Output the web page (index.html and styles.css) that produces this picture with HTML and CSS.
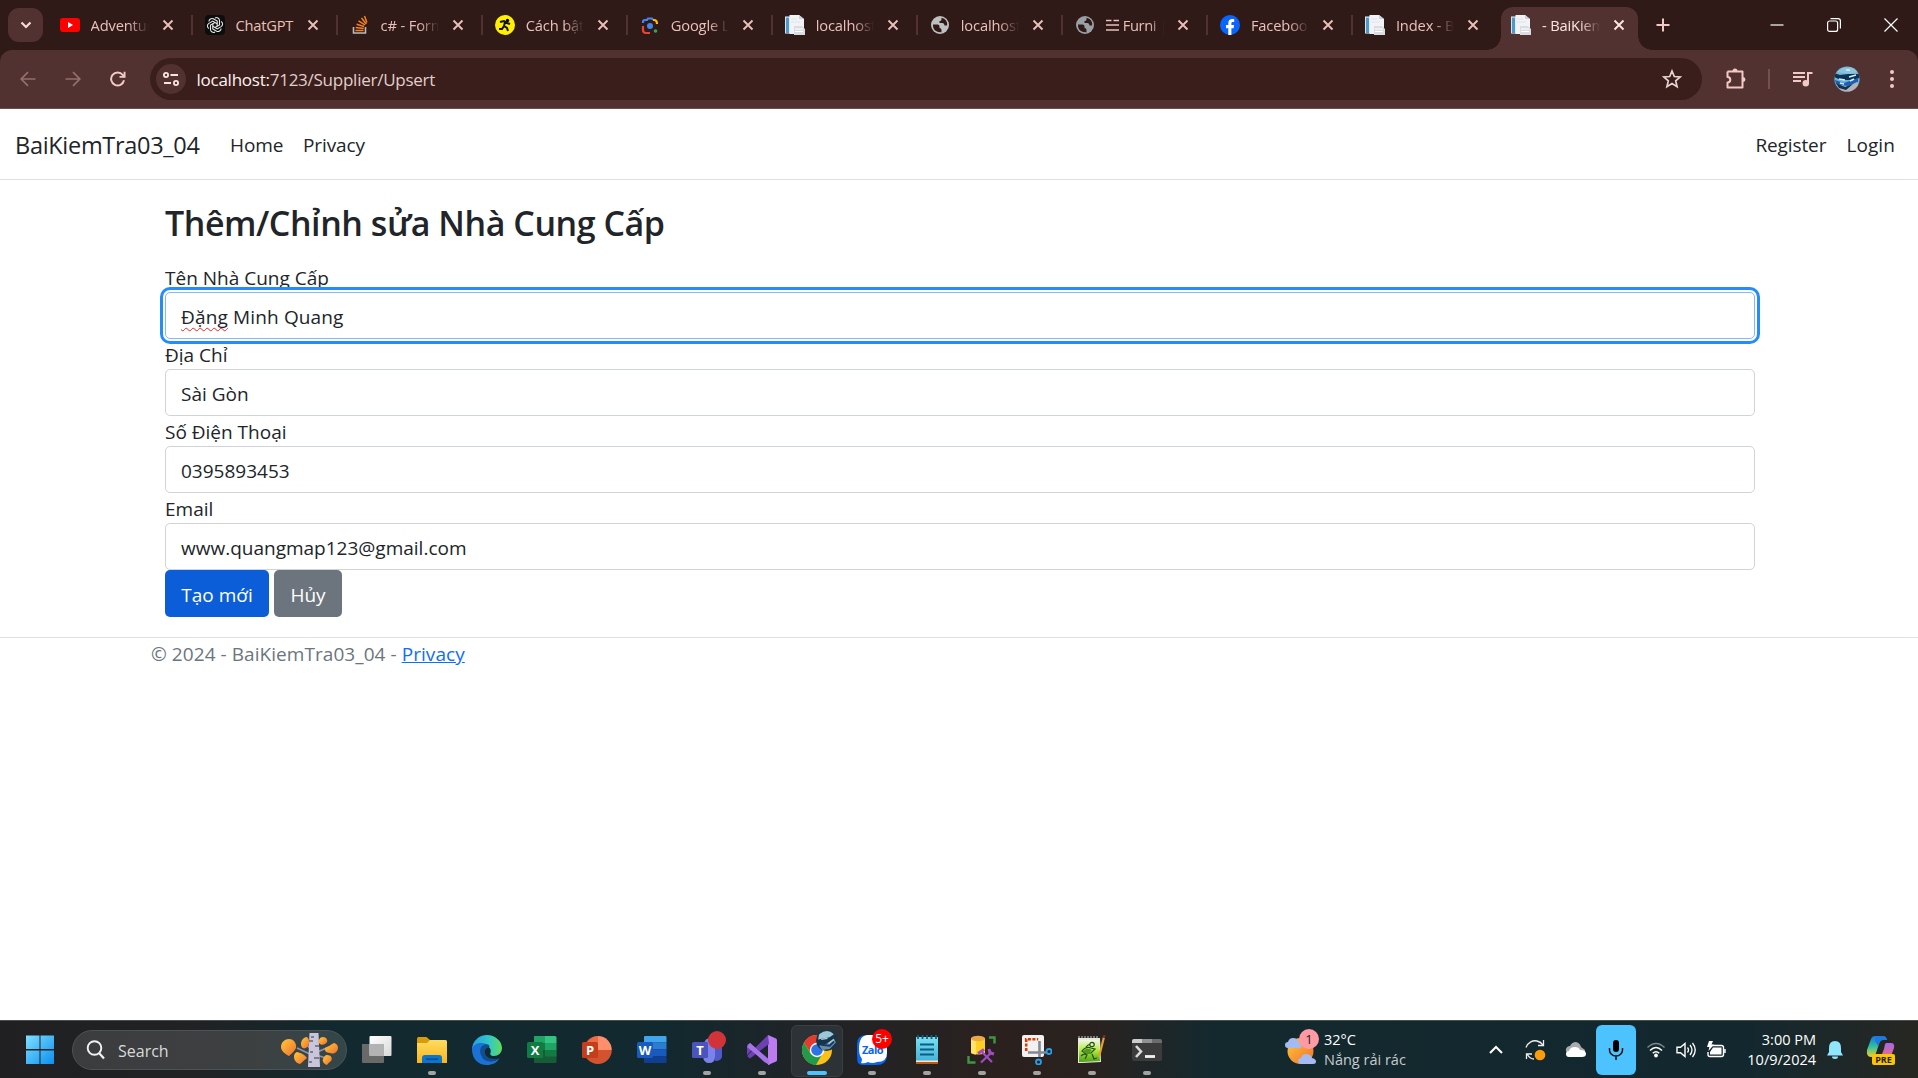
FILE: index.html
```html
<!DOCTYPE html>
<html lang="vi">
<head>
<meta charset="utf-8">
<title>- BaiKiemTra03_04</title>
<link rel="stylesheet" href="styles.css">
</head>
<body>
<svg class="defs" width="0" height="0" aria-hidden="true">
  <defs>
    <symbol id="x" viewBox="0 0 12 12"><path d="M1.500 1.500l9 9M10.500 1.500l-9 9" stroke="currentColor" stroke-width="1.900" fill="none"/></symbol>
    <symbol id="page" viewBox="0 0 20 20"><path d="M0 1.500h5v17H0z" fill="#f4f7fa"/><path d="M.8 2.500h3.400v15.500H.8z" fill="#4a9ad0"/><path d="M4.500 0H14l5 4v15H4.500z" fill="#f1f3f6"/><path d="M14 0l5 4h-5z" fill="#cbd2da"/><path d="M9 11h8l3 3v6H9z" fill="#d9dde2"/><path d="M10 14h8M10 16.500h8" stroke="#fff"/><path d="M6 4h6M6 7h9" stroke="#dfe5eb"/></symbol>
    <symbol id="globe" viewBox="0 0 20 20"><circle cx="10" cy="10" r="9" fill="currentColor"/><path d="M3 9.500h4.500q2 0 2 2v1.500q2 0 2 2v2.200Q5 17.500 3.200 12.500zM11.500 2.800v1.700q0 1.500-2 1.500v2h3q2 0 2 2.500h2.600Q17.800 4.500 11.500 2.800z" fill="#2f1a17"/></symbol>
    <linearGradient id="gwin" x1="0" y1="0" x2="1" y2="1"><stop offset="0" stop-color="#7fe0ff"/><stop offset="1" stop-color="#0b8ff0"/></linearGradient>
    <linearGradient id="gfold" x1="0" y1="0" x2="0" y2="1"><stop offset="0" stop-color="#ffdc62"/><stop offset="1" stop-color="#f9b515"/></linearGradient>
    <linearGradient id="gedge" x1="0" y1="0" x2="1" y2="0"><stop offset="0" stop-color="#1ea0e8"/><stop offset=".6" stop-color="#34c9c4"/><stop offset="1" stop-color="#62dc58"/></linearGradient>
    <linearGradient id="gorange" x1="0" y1="0" x2="1" y2="1"><stop offset="0" stop-color="#ffc83a"/><stop offset="1" stop-color="#f0702c"/></linearGradient>
    <linearGradient id="gview" x1="0" y1="0" x2="1" y2="1"><stop offset="0" stop-color="#fff"/><stop offset="1" stop-color="#d9d9d9"/></linearGradient>
    <linearGradient id="gnote" x1="0" y1="0" x2="0" y2="1"><stop offset="0" stop-color="#7ae0f2"/><stop offset="1" stop-color="#43b3da"/></linearGradient>
    <linearGradient id="ggreen" x1="0" y1="0" x2="0" y2="1"><stop offset="0" stop-color="#f1f6e6"/><stop offset=".45" stop-color="#b4ee3c"/><stop offset="1" stop-color="#4fa01c"/></linearGradient>
    <linearGradient id="gcopa" x1="0" y1="0" x2="0" y2="1"><stop offset="0" stop-color="#1b74e0"/><stop offset=".5" stop-color="#2fc0a0"/><stop offset="1" stop-color="#f1d028"/></linearGradient>
    <linearGradient id="gcopb" x1="0" y1="0" x2="0" y2="1"><stop offset="0" stop-color="#a667e8"/><stop offset="1" stop-color="#f46c72"/></linearGradient>
  </defs>
</svg>

<header class="chrome">
  <div class="tabstrip">
    <button class="tabsearch" aria-label="Search tabs"><svg width="12" height="8" viewBox="0 0 12 8"><path d="M1.500 1.500L6 6l4.500-4.500" stroke="#f7d9d5" stroke-width="2.200" fill="none"/></svg></button>
    <div class="tabs">
      <div class="tab"><svg class="fav" viewBox="0 0 20 20"><rect y="3" width="20" height="14" rx="3" fill="#f00"/><path d="M8 7l5 3-5 3z" fill="#fff"/></svg><span class="title">Adventure</span><svg class="close"><use href="#x"/></svg></div>
      <div class="tab"><svg class="fav" viewBox="0 0 20 20"><rect width="20" height="20" rx="4" fill="#0d0d0d"/><g fill="none" stroke="#e8e8e8" stroke-width="1.100"><path id="petal" d="M10 3a3 3 0 0 1 4.500 2.500v4.500L10 12.500"/><use href="#petal" transform="rotate(60 10 10)"/><use href="#petal" transform="rotate(120 10 10)"/><use href="#petal" transform="rotate(180 10 10)"/><use href="#petal" transform="rotate(240 10 10)"/><use href="#petal" transform="rotate(300 10 10)"/></g></svg><span class="title">ChatGPT</span><svg class="close"><use href="#x"/></svg></div>
      <div class="tab"><svg class="fav" viewBox="0 0 20 20"><path d="M3.500 12v6h12v-6" fill="none" stroke="#bcbbbb" stroke-width="1.600"/><path d="M5.500 15.500h8M5.700 12.600l8 .8M6.600 9.300l7.500 2.200M8.500 5.800l6.500 4M11.500 3l4.800 6M14.500 1l2.400 6.500" stroke="#f48024" stroke-width="1.500"/></svg><span class="title">c# - Format</span><svg class="close"><use href="#x"/></svg></div>
      <div class="tab"><svg class="fav" viewBox="0 0 20 20"><circle cx="10" cy="10" r="10" fill="#fff000"/><circle cx="12.500" cy="5.500" r="1.700"/><path d="M5 7l4-1 3 2 3 1M10 7l-1 4 3 2 1 3M9 11l-2 3H4" fill="none" stroke="#111" stroke-width="2"/></svg><span class="title">Cách bật tắt</span><svg class="close"><use href="#x"/></svg></div>
      <div class="tab"><svg class="fav" viewBox="0 0 20 20"><g fill="none" stroke-width="2.200"><path d="M3 8V7q0-2 2-2h2l1-1.500h4L13 5" stroke="#4285f4"/><path d="M13 5h1q3 0 3 4" stroke="#fbbc04"/><path d="M3 11v4q0 3 3 3h4" stroke="#ea4335"/></g><circle cx="10" cy="11" r="3" fill="#4285f4"/><circle cx="15.500" cy="16" r="1.800" fill="#34a853"/></svg><span class="title">Google Lens</span><svg class="close"><use href="#x"/></svg></div>
      <div class="tab"><svg class="fav"><use href="#page"/></svg><span class="title">localhost:7123</span><svg class="close"><use href="#x"/></svg></div>
      <div class="tab"><svg class="fav light"><use href="#globe"/></svg><span class="title">localhost:7123</span><svg class="close"><use href="#x"/></svg></div>
      <div class="tab"><svg class="fav dim"><use href="#globe"/></svg><span class="title furni"><svg class="tri" width="13" height="13" viewBox="0 0 13 13"><path d="M0 1.500h5.500M7.500 1.500H13M0 6h13M0 11h13" stroke="currentColor" stroke-width="1.500"/></svg>Furni | Shop</span><svg class="close"><use href="#x"/></svg></div>
      <div class="tab"><svg class="fav" viewBox="0 0 20 20"><circle cx="10" cy="10" r="10" fill="#0866ff"/><path d="M8.300 20v-6.800H6V10h2.300V8.300C8.300 5.300 10 4 12.300 4c.8 0 1.500.1 1.900.2v2.700h-1.300c-1.300 0-1.500.7-1.500 1.500V10h2.700l-.5 3.200h-2.200V20z" fill="#fff"/></svg><span class="title">Facebook</span><svg class="close"><use href="#x"/></svg></div>
      <div class="tab nosep"><svg class="fav"><use href="#page"/></svg><span class="title">Index - BaiKiem</span><svg class="close"><use href="#x"/></svg></div>
      <div class="tab active"><svg class="fav"><use href="#page"/></svg><span class="title">- BaiKiemTra</span><svg class="close"><use href="#x"/></svg></div>
    </div>
    <svg class="newtab" width="14" height="14" viewBox="0 0 14 14"><path d="M7 0.500v13M.5 7h13" stroke="#f3c9c3" stroke-width="2"/></svg>
    <div class="winbtns">
      <svg width="14" height="14" viewBox="0 0 14 14"><path d="M.5 7h13" stroke="#fff" stroke-width="1.200"/></svg>
      <svg width="14" height="14" viewBox="0 0 14 14"><rect x=".6" y="3" width="10" height="10.400" rx="2" fill="none" stroke="#fff" stroke-width="1.200"/><path d="M3.500.7H11q2.400 0 2.400 2.400v7.500" fill="none" stroke="#fff" stroke-width="1.200"/></svg>
      <svg width="14" height="14" viewBox="0 0 14 14"><path d="M.5.5l13 13M13.500.5l-13 13" stroke="#fff" stroke-width="1.200"/></svg>
    </div>
  </div>
  <div class="toolbar">
    <div class="nav">
      <svg width="16" height="16" viewBox="0 0 16 16"><path d="M15.500 8H1.500M8 1.200L1.200 8 8 14.800" stroke="#946f6b" stroke-width="1.700" fill="none"/></svg>
      <svg width="16" height="16" viewBox="0 0 16 16"><path d="M.5 8h14M8 1.200L14.800 8 8 14.800" stroke="#946f6b" stroke-width="1.700" fill="none"/></svg>
      <svg width="16" height="16" viewBox="0 0 16 16"><path d="M14 9.300A6.500 6.500 0 1 1 12.800 4L14.500 6" stroke="#f3c9c3" stroke-width="2" fill="none"/><path d="M15.500 .8v6h-6v-1.900h4.100V.8z" fill="#f3c9c3"/></svg>
    </div>
    <div class="omnibox">
      <span class="siteinfo"><svg width="16" height="14" viewBox="0 0 16 14"><g fill="none" stroke="#f7e4e1" stroke-width="1.800"><circle cx="3" cy="3" r="2.100"/><path d="M7.500 3H15M1 11h7"/><circle cx="13" cy="11" r="2.100"/></g></svg></span>
      <span class="url"><b>localhost:</b>7123/Supplier/Upsert</span>
      <svg class="star" width="20" height="20" viewBox="0 0 20 20"><path d="M10 2l2.300 5.500 5.900.5-4.500 3.900 1.400 5.800L10 14.600l-5.100 3.100 1.400-5.800L1.800 8l5.900-.5z" fill="none" stroke="#e6d3d0" stroke-width="1.700"/></svg>
    </div>
    <div class="actions">
      <svg class="puzzle" width="22" height="22" viewBox="0 0 22 22"><path d="M2.500 3.500h15v6.500M17.500 13v6.500h-15v-5a2.800 2.800 0 0 0 0-5.600V3.500M17.500 9v6" fill="none" stroke="#f3c9c3" stroke-width="2" stroke-linejoin="round"/><path d="M7.500 3a2.500 2.500 0 0 1 5 0zM18 9a2.500 2.500 0 0 1 0 5z" fill="#f3c9c3"/></svg>
      <i class="vsep"></i>
      <svg class="music" width="20" height="16" viewBox="0 0 20 16"><path d="M0 2h12M0 6h12M0 10h8" stroke="#f3c9c3" stroke-width="1.900"/><circle cx="12.800" cy="12.300" r="3.200" fill="#f3c9c3"/><path d="M15 12.500V2h4.500" stroke="#f3c9c3" stroke-width="2" fill="none"/></svg>
      <svg class="avatar" width="26" height="26" viewBox="0 0 26 26"><clipPath id="av"><circle cx="13" cy="13" r="12.600"/></clipPath><g clip-path="url(#av)"><path fill="#6eb5d8" d="M0 0h26v26H0z"/><path d="M0 7l6 2 8-1 12 0v4l-9 2-10 0-7-3z" fill="#0d3356"/><path d="M3 6l5-4 12-1 4 5-9 2z" fill="#8cc4dc"/><path d="M1 14l9 3 14-5v4l-10 4-12-2z" fill="#1a60b4"/><path d="M4 21l8 1 11-6 3 6-6 6H8z" fill="#b5b1b6"/><path d="M2 17l9 4 8-3-7 6-7-2z" fill="#173050"/><path d="M5 13l6 1M15 11l7-2M12 4h4M6 17l4 1M16 15l4-2" stroke="#d4effa" stroke-width="1.500"/></g></svg>
      <svg class="dots" width="6" height="22" viewBox="0 0 6 22"><g fill="#f3c9c3"><circle cx="3" cy="4" r="2"/><circle cx="3" cy="11" r="2"/><circle cx="3" cy="18" r="2"/></g></svg>
    </div>
  </div>
</header>

<div class="site">
  <nav class="navbar">
    <a class="brand">BaiKiemTra03_04</a>
    <a class="navlink home">Home</a>
    <a class="navlink">Privacy</a>
    <span class="grow"></span>
    <a class="navlink register">Register</a>
    <a class="navlink login">Login</a>
  </nav>
  <main class="container">
    <h2>Thêm/Chỉnh sửa Nhà Cung Cấp</h2>
    <form>
      <label>Tên Nhà Cung Cấp</label>
      <div class="control focused"><span class="typo">Đặng</span> Minh Quang</div>
      <label>Địa Chỉ</label>
      <div class="control">Sài Gòn</div>
      <label>Số Điện Thoại</label>
      <div class="control">0395893453</div>
      <label>Email</label>
      <div class="control email">www.quangmap123@gmail.com</div>
      <div class="buttons"><button type="button" class="btn primary">Tạo mới</button><button type="button" class="btn secondary">Hủy</button></div>
    </form>
  </main>
  <footer>© 2024 - BaiKiemTra03_04 - <a>Privacy</a></footer>
</div>

<div class="taskbar">
  <svg class="start" width="30" height="30" viewBox="0 0 30 30"><path d="M1 .500h13.500V14H1zM15.500.500H29V14H15.500zM1 15.500h13.500V29H1zM15.500 15.500H29V29H15.500z" fill="url(#gwin)"/></svg>
  <div class="search">
    <svg width="20" height="20" viewBox="0 0 20 20"><circle cx="8.500" cy="8" r="6.800" fill="none" stroke="#f2f2f2" stroke-width="1.900"/><path d="M13 13l5 5.500" stroke="#f2f2f2" stroke-width="2.200"/></svg>
    <span>Search</span>
    <svg class="tree" width="60" height="34" viewBox="0 0 60 34"><path d="M32 22L17 15M33 18l-7-7M35 20l14-6M36 22l10 3" stroke="#8d93a8" stroke-width="1.800"/><path d="M29.500 0h9l1.500 34H28z" fill="#c9c5da"/><path d="M29 8h4M35 13h4M30 19h3M34 25h5M29 29h3M31 4h3" stroke="#676478" stroke-width="1.300"/><g fill="url(#gorange)"><path d="M9 6c5 0 8 5 7 9-2 4-5 6-7 8-4-2-8-5-8-9 0-5 4-8 8-8z"/><path d="M27 4c3 3 3 7 0 10-3 3-6 1-6-3s3-7 6-7z"/><path d="M43 4c3 0 5 3 4 5-2 3-6 4-8 1-1-3 1-6 4-6z"/><path d="M54 10c4 1 5 5 3 8-2 3-5 3-7 2-4 0-6-3-5-5 3-1 5-3 9-5z"/><path d="M17 19c3 1 6 1 10 6-3 2-4 4-7 6-4-1-6-4-6-7s1-4 3-5z"/><path d="M47 22c4 0 6 3 4 6-1 1-3 2-4 4-3-1-5-4-4-6s2-4 4-4z"/></g></svg>
  </div>
  <div class="apps">
    <div class="app"><svg viewBox="0 0 30 30"><path d="M0 9h22v18q0 1-1 1H1q-1 0-1-1z" fill="#696969"/><rect x="7.500" y="1" width="22" height="20" rx="1" fill="url(#gview)"/><path d="M7.500 9H22v12H8.500q-1 0-1-1z" fill="#b3b3b3"/></svg></div>
    <div class="app run"><svg viewBox="0 0 30 30"><path d="M0 3.500Q0 2 1.500 2h8L13 5v5H0z" fill="#d99a0c"/><path d="M0 8h10l3-3h15.500Q30 5 30 6.500V28H0z" fill="url(#gfold)"/><path d="M5 28v-5q0-3 3-3h14q3 0 3 3v5z" fill="#0a74cf"/><path d="M9 24.200h12" stroke="#064e96" stroke-width="1.500"/></svg></div>
    <div class="app"><svg viewBox="0 0 30 30"><path d="M0 15C0 6 7 0 15 0s15 6 15 13c0 5-4 8-8 8-3 0-4.500-1.500-3.500-3 1.500-5-3-8-8-7S0 17 0 15z" fill="url(#gedge)"/><path d="M0 14C2 8 9 7 14 9c-4 1-6 5-5 9 1 6 7 9 12 8 2 0 4-1 6.500-3C25 28 20 30 15 30 6 30 0 24 0 14z" fill="#1b72d4"/><path d="M14 9c-5 1-7 6-5 11 3 8 12 8 18 3-4 2-13 1-14-5-.5-2 0-4 3-5.500C19 12 17 9 14 9z" fill="#104d92"/></svg></div>
    <div class="app"><svg viewBox="0 0 30 30"><path d="M7 1h11v14H7z" fill="#21a366"/><path d="M18 1h10q1.500 0 1.500 1.500V8H18z" fill="#33c481"/><path d="M18 8h11.500v7H18z" fill="#21a366"/><path d="M7 8h11v7H7z" fill="#107c41"/><path d="M7 15h22.500v12q0 1-1 1H8q-1 0-1-1z" fill="#185c37"/><path d="M18 15h11.500v6.500H18z" fill="#107c41"/><rect y="7" width="16" height="16" rx="1.500" fill="#107c41"/><text x="8" y="20" class="officeletter">X</text></svg></div>
    <div class="app"><svg viewBox="0 0 30 30"><path d="M16 1a14 14 0 1 0 13.800 14H16z" fill="#d35230"/><path d="M16 1v14h13.800A14 14 0 0 0 16 1z" fill="#ff8f6b"/><path d="M3 15h13V1A14 14 0 0 0 3 15z" fill="#ed6c47"/><rect y="7" width="16" height="16" rx="1.500" fill="#c43e1c"/><text x="8" y="20" class="officeletter">P</text></svg></div>
    <div class="app"><svg viewBox="0 0 30 30"><path d="M7 2q0-1 1-1h20.500q1 0 1 1v5.500H7z" fill="#41a5ee"/><path d="M7 7.500h22.500v7H7z" fill="#2b7cd3"/><path d="M7 14.500h22.500v7H7z" fill="#185abd"/><path d="M7 21.500h22.500V27q0 1-1 1H8q-1 0-1-1z" fill="#103f91"/><rect y="7" width="16" height="16" rx="1.500" fill="#185abd"/><text x="8" y="20" class="officeletter">W</text></svg></div>
    <div class="app run"><svg viewBox="0 0 30 30"><circle cx="17" cy="8" r="4.500" fill="#7b83eb"/><path d="M11 12h12v10q0 6-6 6-5 0-6-6z" fill="#7b83eb"/><path d="M23 12h7v9q0 5-7 5z" fill="#5059c9"/><rect y="7" width="16" height="16" rx="1.500" fill="#4b53bc"/><text x="8" y="20" class="officeletter">T</text></svg><i class="badge reddot"></i></div>
    <div class="app run"><svg viewBox="0 0 30 30"><path d="M0 10l3-2 20 17v5L17 27z" fill="#8a5bd0"/><path d="M21 0l8 3.500q1 .5 1 2V25q0 1-1 1.500L21 30z" fill="#bd7bf0"/><path d="M21 0L1 20q-1 1 0 2l2 1.500L22 9zM0 10v10l5-5z" fill="#6b41b4"/><path d="M3 8l19 17v5L0 12z" fill="#a674e6"/></svg></div>
    <div class="app current"><svg viewBox="0 0 30 30"><circle cx="15" cy="15" r="15" fill="#fbc116"/><path d="M2 7.500a15 15 0 0 1 26 0H15l-6 11z" fill="#e33b2e"/><path d="M2 7.500A15 15 0 0 0 14 30l6.500-11.500-12 0z" fill="#229a4c"/><circle cx="15" cy="15" r="7.200" fill="#fff"/><circle cx="15" cy="15" r="5.800" fill="#2e72e8"/></svg><svg class="badge face" viewBox="0 0 20 20"><circle cx="10" cy="10" r="10" fill="#16354d"/><path d="M3 4q8-6 14 0l-4 3-11 2z" fill="#9cc8d8"/><path d="M3 15l7-2 7-5 2 4-6 6-7 1z" fill="#6a8ea0"/><path d="M5 14l8 1 4-4" stroke="#143a6a" stroke-width="2" fill="none"/><path d="M5 9l6-1M12 13l5-4" stroke="#b8c8d0" stroke-width="1.300"/></svg></div>
    <div class="app run"><svg viewBox="0 0 30 30"><path d="M10 0h12q8 0 8 8v12q0 10-11 10H6q-3 0-5-2Q0 25 0 20V9q0-9 10-9z" fill="#0866ee"/><path d="M11 0h11q8 0 8 8v10q0 9-10 9-5 2-9 0-4 2-7 1 1-2 1-4-3-4-3-10Q2 0 11 0z" fill="#fff"/><text x="15.500" y="19" class="zalo">Zalo</text></svg><i class="badge count">5+</i></div>
    <div class="app run"><svg viewBox="0 0 30 30"><path d="M4 2h22v24H4z" fill="url(#gnote)"/><path d="M4 26h22v3H4z" fill="#bf5914"/><path d="M4 25.500h22v1.500H4z" fill="#f4e6d6"/><path d="M6 0v4M10.500 0v4M15 0v4M19.500 0v4M24 0v4" stroke="#11617c" stroke-width="1.800"/><path d="M8 9.500h14M8 14.500h14M8 19.500h14" stroke="#0c5d86" stroke-width="1.900"/></svg></div>
    <div class="app run"><svg viewBox="0 0 30 30"><path d="M4 3v15q7 3 14 0V3z" fill="#ffcf20"/><path d="M4 3v15q3 1.500 5 1.500V3z" fill="#ffe26a"/><ellipse cx="11" cy="3.500" rx="7" ry="2.800" fill="#e9a747"/><path d="M22 2.500h5.500v6M1.500 21v6.500h7" fill="none" stroke="#409540" stroke-width="2.400"/><path d="M15 17l10 10M25 17L14 27.500" stroke="#a24ac0" stroke-width="2.200"/><path d="M11 18.500l6-4M22 14l1 4 4 1" stroke="#a24ac0" stroke-width="3" fill="none"/></svg></div>
    <div class="app run"><svg viewBox="0 0 30 30"><rect width="22" height="22" rx="2" fill="#f1f1f1"/><path d="M4.200 16V4.200h12" fill="none" stroke="#d83b01" stroke-width="2.600" stroke-dasharray="3 1.500"/><path d="M17.500 6v16M6 17.500h18" stroke="#83898f" stroke-width="2.600"/><circle cx="27" cy="16.500" r="2.500" fill="none" stroke="#24a2ed" stroke-width="1.800"/><circle cx="16.500" cy="27" r="2.500" fill="none" stroke="#24a2ed" stroke-width="1.800"/></svg></div>
    <div class="app run"><svg viewBox="0 0 30 30"><path d="M1 3h22l1 24-19 1H1z" fill="#e7e9df"/><path d="M2 5h20l1 21-18 1H2z" fill="url(#ggreen)"/><g fill="none" stroke="#234f15" stroke-width="1.200"><path d="M5 16q4-5 9-3l4 1-4 4H8zM9 12q3-4 7-2M4 21q3-3 6-1l-2 4M15 19l2 5 3-1"/><circle cx="15" cy="9.500" r="2.200" fill="#dff5c8"/></g><path d="M6 16q4-4 9-1l-3 3H8z" fill="#4c9d22"/><path d="M2 3V1M5 3V1M8 3V1M11 3V1M14 3V1M17 3V1M20 3V1" stroke="#ccc"/><path d="M27 2l-4 16-1 3" fill="none" stroke="#e3a12e" stroke-width="2.200"/><path d="M27.500 0l-.6 3" stroke="#7a2d2d" stroke-width="2"/></svg></div>
    <div class="app run"><svg viewBox="0 0 30 30"><rect y="4" width="30" height="22" rx="2" fill="#3c3c3c"/><path d="M0 8V6q0-2 2-2h8v4z" fill="#ccc"/><path d="M10 4h10v4H10z" fill="#929292"/><path d="M20 4h8q2 0 2 2v2H20z" fill="#6c6c6c"/><path d="M4 11l5 5.500L4 22" stroke="#dadada" stroke-width="2.600" fill="none"/><path d="M13 21.500h10" stroke="#f2f2f2" stroke-width="2.800"/></svg></div>
  </div>
  <div class="weather">
    <div class="sun"><svg width="32" height="32" viewBox="0 0 32 32"><circle cx="15.500" cy="17" r="13" fill="url(#gorange)"/><path d="M3 14q-3 0-3-3t3-3q1-4 5-4 5 0 6 5 3 1 2 5z" fill="#a5baf1"/><path d="M16 30q-3 0-3-3t3-3q1-4 5-4 5 0 6 4 4 1 4 3.500T28 30z" fill="#a5baf1"/></svg><i>1</i></div>
    <div class="wtext"><span>32°C</span><span class="sub">Nắng rải rác</span></div>
  </div>
  <div class="tray">
    <svg class="chev" width="14" height="9" viewBox="0 0 14 9"><path d="M1 8l6-6 6 6" stroke="#fff" stroke-width="2" fill="none"/></svg>
    <svg class="sync" width="22" height="22" viewBox="0 0 22 22"><path d="M2 8.500C4 3 9 1 13 2q4 1 6 4M19.500 1v5.500H14M8 15H2.500v5M3 15q3 5 7 5" stroke="#eee" stroke-width="1.300" fill="none"/><circle cx="16" cy="16" r="5.300" fill="#fb9c0b"/></svg>
    <svg class="cloud" width="22" height="16" viewBox="0 0 22 16"><path d="M4 11Q0 10 1 7q1-3 4-3 2-4 6-4 4 1 5 5l4 3v4z" fill="#a9acad"/><path d="M4 15q-3 0-3-3t3-3q1-4 6-4 4 0 5 3 6 0 6 4 0 3-4 3z" fill="#fff"/></svg>
    <div class="mic"><svg width="16" height="22" viewBox="0 0 16 22"><rect x="5" y="1" width="6" height="12" rx="3"/><path d="M1.500 9v2a6.500 6 0 0 0 13 0V9M8 17v4" stroke="#111" stroke-width="1.500" fill="none"/></svg></div>
    <svg class="wifi" width="18" height="16" viewBox="0 0 18 16"><g fill="none" stroke="#fff" stroke-width="1.500"><path d="M.5 5.500q8.500-8 17 0" opacity=".45"/><path d="M3 8.500q6-6 12 0M5.800 11.300q3.200-3 6.400 0"/></g><circle cx="9" cy="13.500" r="1.900" fill="#fff"/></svg>
    <svg class="vol" width="20" height="18" viewBox="0 0 20 18"><path d="M1 6.300h3.500L9 2.500v13l-4.500-3.800H1z" fill="none" stroke="#fff" stroke-width="1.400"/><path d="M11.500 6.500q2 2.500 0 5M14 4q4 5 0 10M16.500 2q5.500 7 0 14" fill="none" stroke="#fff" stroke-width="1.300"/></svg>
    <svg class="batt" width="20" height="18" viewBox="0 0 20 18"><path d="M6 4.500h9.500q2 0 2 2v7q0 2-2 2H4q-2 0-2-2V11" fill="none" stroke="#fff" stroke-width="1.400"/><path d="M7 6.500h8.500v7H4V11z" fill="#fff"/><path d="M18.200 8h1.500v4h-1.500zM3 0h4L5.500 3.500H8L2.500 10l.8-4H1z" fill="#fff"/></svg>
    <div class="clock"><span>3:00 PM</span><span>10/9/2024</span></div>
    <svg class="bell" width="18" height="20" viewBox="0 0 18 20"><path d="M9 1q6 0 6 7v4l2 3.500H1L3 12V8q0-7 6-7zM6 16.500h6q0 2.500-3 2.500t-3-2.500z" fill="#90e7fd"/></svg>
    <div class="copilot"><svg width="30" height="30" viewBox="0 0 30 30"><path d="M5 4q1-3 4-3h8q3 0 4 4h-4q-3 0-4 4l-3 9q-1 4-5 4Q0 22 1 15z" fill="url(#gcopa)"/><path d="M20 8h5q4 0 3 5l-3 8q-1 3-4 3h-7l4-10q1-6 2-6z" fill="url(#gcopb)"/><path d="M9 1h8q3 0 4 4h-4q-3 0-4 4l-1 2-3-5z" fill="#1e78df"/></svg><i>PRE</i></div>
  </div>
</div>
</body>
</html>
```
FILE: styles.css
```css
* { box-sizing: border-box; }
html, body { margin: 0; height: 100%; overflow: hidden; }
body {
  display: flex; flex-direction: column;
  width: 1918px; height: 1078px;
  font-family: "Open Sans", "Noto Sans", sans-serif;
  font-size: 19px; line-height: 30px;
  color: #212529; background: #fff;
}
svg { display: block; flex: none; }
.defs { position: absolute; }
i { font-style: normal; }
button { font: inherit; border: 0; padding: 0; }

/* browser frame */
.chrome { flex: none; height: 109px; background: #2f1a17; color: #eac0ba; }
.tabstrip { display: flex; height: 50px; padding-left: 8px; }
.tabsearch { width: 35px; height: 34px; margin-top: 8px; border-radius: 11px; background: #513230; display: flex; align-items: center; justify-content: center; }
.tabs { display: flex; margin-left: 5px; }
.tab { display: flex; align-items: center; width: 145.05px; height: 50px; padding-left: 12px; position: relative; font-size: 14.7px; line-height: 20px; }
.tab::after { content: ""; position: absolute; right: 0; top: 15px; width: 2px; height: 20px; background: #513230; }
.tab.nosep::after, .tab.active::after { display: none; }
.fav { width: 20px; height: 20px; }
.fav.light { color: #bfc0c0; }
.fav.dim { color: #9aa0a6; }
.title { margin-left: 10.500px; width: 58px; overflow: hidden; white-space: nowrap; letter-spacing: -.15px; -webkit-mask-image: linear-gradient(90deg, #000 65%, transparent); mask-image: linear-gradient(90deg, #000 65%, transparent); }
.tab:nth-child(2) .title { -webkit-mask-image: none; mask-image: none; letter-spacing: -.25px; }
.tri { display: inline-block; vertical-align: -1px; margin-right: 4px; }
.furni { letter-spacing: -.4px; -webkit-mask-image: linear-gradient(90deg, #000 75%, transparent); mask-image: linear-gradient(90deg, #000 75%, transparent); }
.close { width: 12px; height: 12px; margin-left: 13.500px; color: #eac0ba; }
.active { color: #fbe6e3; width: 137px; height: 43px; margin-top: 7px; margin-left: 3px; padding: 0 0 7px 10px; border-radius: 12px 12px 0 0; background: #513230; }
.active::before { content: ""; position: absolute; left: -14px; right: -14px; bottom: 0; height: 14px; background: radial-gradient(circle at 0 0, transparent 13.500px, #513230 14px) left / 14px 14px no-repeat, radial-gradient(circle at 14px 0, transparent 13.500px, #513230 14px) right / 14px 14px no-repeat; }
.active .close { color: #fbe6e3; }
.newtab { margin: 18px 0 0 18px; }
.winbtns { display: flex; gap: 43px; margin: 18px 20px 0 auto; }
.toolbar { display: flex; align-items: center; height: 59px; background: #513230; border-radius: 12px 12px 0 0; border-bottom: 1px solid #6a4f4c; }
.nav { display: flex; gap: 29px; margin-left: 20px; width: 130px; }
.omnibox { display: flex; align-items: center; width: 1552px; height: 42px; border-radius: 21px; background: #3a1e1b; padding: 0 20px 0 6px; }
.siteinfo { width: 30px; height: 30px; border-radius: 50%; background: #513230; display: flex; align-items: center; justify-content: center; }
.url { margin-left: 10.500px; padding-top: 1px; font-size: 17px; color: #e1cfcc; letter-spacing: -.25px; }
.url b { font-weight: 400; color: #fff2f0; }
.star { margin-left: auto; }
.actions { display: flex; align-items: center; margin-left: 23px; }
.vsep { width: 2px; height: 20px; background: #76504c; margin: 0 23px 0 21px; }
.avatar { margin-left: 21px; }
.dots { margin-left: 29px; }

/* web page */
.site { flex: 1; min-height: 0; }
.navbar { display: flex; align-items: center; height: 71px; padding: 1px 23px 0 15px; border-bottom: 1px solid #dee2e6; }
.brand { font-size: 23.500px; letter-spacing: -.3px; width: 215px; }
.navlink { letter-spacing: -.1px; width: 73px; }
.grow { flex: 1; }
.register { width: 91px; }
.login { width: auto; letter-spacing: .1px; }
.container { width: 1590px; margin: 0 0 0 165px; padding-top: 18px; }
h2 { margin: 0 0 14px; font-size: 34px; line-height: 50px; font-weight: 600; letter-spacing: -.45px; }
form { display: flex; flex-direction: column; }
label { padding-top: 2px; line-height: 28px; }
.control { height: 47px; border: 1px solid #ced4da; border-radius: 5px; padding: 1px 15px 0; line-height: 47px; background: #fff; }
.focused { border-color: #86b7fe; outline: 3px solid #258dfb; outline-offset: 2px; letter-spacing: .15px; }
.typo { text-decoration: underline wavy #e22 1px; text-underline-offset: 3px; text-decoration-skip-ink: none; }
.buttons { display: flex; gap: 5px; }
.btn { height: 47px; padding-top: 2px; border-radius: 5px; color: #fff; }
.primary { width: 104px; background: #0b5ed7; }
.secondary { width: 68px; background: #6c757d; }
footer { margin-top: 20px; border-top: 1px solid #dee2e6; padding: 1px 0 0 151px; line-height: 30px; color: #6c757d; letter-spacing: .06px; }
footer a { color: #0d6efd; text-decoration: underline; }

/* taskbar */
.taskbar { flex: none; display: flex; align-items: center; height: 58px; padding-left: 25px; border-top: 1px solid #4a4c4e; background: linear-gradient(90deg, #202022 0, #202224 200px, #11292f 340px, #11292f 660px, #202326 810px, #2a211f 1000px, #2a221f 1090px, #14292e 1210px, #13282e 1750px, #272722 1918px); color: #fff; font-size: 14.500px; }
.search { display: flex; align-items: center; width: 275px; height: 40px; margin-left: 17px; padding-left: 13px; border-radius: 20px; border: 1px solid #4c5356; background: linear-gradient(90deg, #3b3c3d 0, #3d4041 65%, #344649 100%); }
.search span { margin-left: 12px; font-size: 16px; line-height: 20px; padding-top: 2px; color: #d8dada; letter-spacing: 0; width: 162px; }
.apps { display: flex; margin-left: 2px; }
.app { position: relative; width: 55px; height: 57px; padding: 14px 12.500px 0; }
.app > svg:first-child { width: 30px; height: 30px; position: relative; }
.app::after { content: ""; position: absolute; left: 23.500px; top: 50px; width: 8px; height: 4px; border-radius: 2px; }
.run::after { background: #a2a3a3; }
.current::before { content: ""; position: absolute; left: 2px; top: 4px; width: 50px; height: 50px; border-radius: 6px; background: #2c3235; border: 1px solid #3a3f42; }
.current::after { left: 17.500px; width: 20px; background: #4cc2ff; }
.badge { position: absolute; }
.reddot { left: 29px; top: 10px; width: 18px; height: 18px; border-radius: 50%; background: #d13438; }
.face { left: 27px; top: 9px; width: 21px; height: 21px; }
.count { left: 28px; top: 8px; width: 20px; height: 20px; border-radius: 50%; background: #f00; font-size: 12px; line-height: 20px; text-align: center; }
.officeletter { font: bold 13px "Open Sans", sans-serif; fill: #fff; text-anchor: middle; }
.zalo { font: bold 11px "Open Sans", sans-serif; fill: #0866ee; text-anchor: middle; letter-spacing: -.5px; }
.weather { display: flex; align-items: center; margin-left: 111px; width: 204px; }
.sun { position: relative; width: 39px; }
.sun i { position: absolute; left: 14px; top: -5px; width: 20px; height: 20px; border-radius: 50%; background: #ff99a4; color: #222; font-size: 13px; line-height: 20px; text-align: center; }
.wtext, .clock { display: flex; flex-direction: column; line-height: 20px; }
.sub { color: #c6cccf; }
.tray { display: flex; align-items: center; }
.sync { margin-left: 21px; }
.cloud { margin-left: 19px; }
.mic { display: flex; align-items: center; justify-content: center; width: 40px; height: 50px; margin-left: 9px; border-radius: 6px; background: #4cc2ff; }
.wifi { margin-left: 11px; }
.vol { margin-left: 11px; }
.batt { margin-left: 10px; }
.clock { width: 90px; text-align: right; letter-spacing: 0; }
.bell { margin-left: 10px; }
.copilot { position: relative; margin-left: 22px; }
.copilot i { position: absolute; left: 6px; top: 19px; width: 23px; height: 11px; border-radius: 2px; background: #ffc400; color: #222; font-size: 9px; line-height: 11px; font-weight: 700; text-align: center; }
```
